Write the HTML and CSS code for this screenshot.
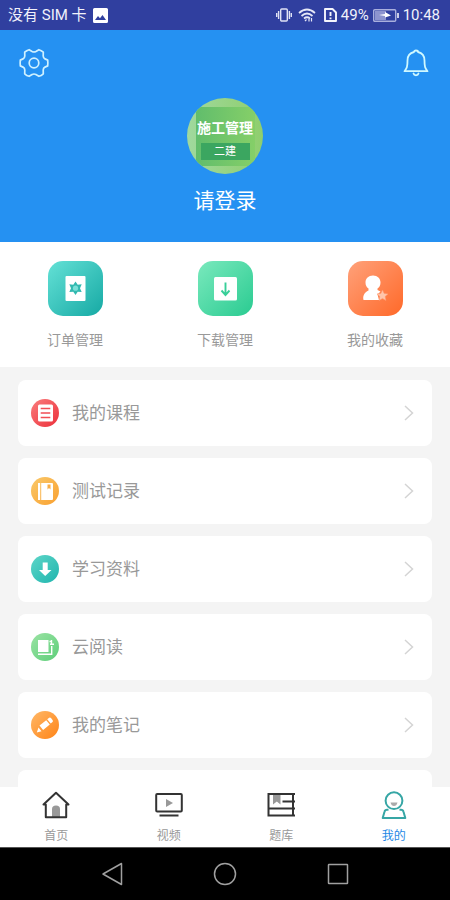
FILE: index.html
```html
<!DOCTYPE html>
<html lang="zh-CN">
<head>
<meta charset="utf-8">
<meta name="viewport" content="width=device-width, initial-scale=1">
<title>我的</title>
<link rel="stylesheet" href="styles.css">
</head>
<body>
<div class="app">
  <div class="status">
    <span>没有 SIM 卡</span>
    <svg class="photo" width="15" height="15" viewBox="0 0 15 15"><path fill="#fff" fill-rule="evenodd" d="M1.500 0h12a1.500 1.500 0 0 1 1.500 1.500v12a1.500 1.500 0 0 1-1.500 1.500h-12A1.500 1.500 0 0 1 0 13.500v-12A1.500 1.500 0 0 1 1.500 0zM2 12h11L9.500 7 7 10.200 5 8z"/></svg>
    <div class="status-right">
      <svg width="16" height="14" viewBox="0 0 16 14" fill="none" stroke="#dfe2f5" stroke-width="1.400"><rect x="4.700" y="1" width="6.600" height="12" rx="1"/><path d="M2.600 3v8M.7 5v4M13.400 3v8M15.300 5v4"/></svg>
      <svg class="wifi" width="18" height="14" viewBox="0 0 18 14" fill="none" stroke="#e6e8f7" stroke-width="1.700"><path d="M1 5Q9-2 17 5M3.500 8Q9 3 14.500 8M6 10.500Q9 8 12 10.500"/><path d="M7 13l1.500-1.500M11 13.500V11M13.500 13.500V10" stroke-width="1.200"/></svg>
      <svg width="13" height="14" viewBox="0 0 13 14" fill="none" stroke="#f4f5fc" stroke-width="1.900"><path d="M1 1h7.500L12 4.500V13H1z" stroke-linejoin="round"/><path d="M6.500 4v4M6.500 9.500v1.700"/></svg>
      <span>49%</span>
      <svg width="26" height="13" viewBox="0 0 26 13"><rect x=".7" y=".7" width="22" height="11.600" rx="1" fill="none" stroke="#a9afdd" stroke-width="1.400"/><path fill="#8d94cf" d="M2 2h11v9H2z"/><path fill="#fff" d="M6 6l6-1V3l6 3.500-6 2V7z"/><path stroke="#fff" stroke-width="1.500" d="M25 4v5"/></svg>
      <span>10:48</span>
    </div>
  </div>

  <header class="profile">
    <div class="actions">
      <button class="icon-btn" aria-label="设置"><svg width="30" height="30" viewBox="-15 -15 30 30" fill="none" stroke="#cff1ff" stroke-width="1.700" stroke-linejoin="round"><path d="M13.700-2.900Q14 0 13.700 2.900L11 4.100Q9.200 5.200 9.200 6.900L9.300 10.800Q7.300 12.600 4.900 13.300L1.900 11.500Q0 10.500-1.900 11.500L-4.900 13.300Q-7.300 12.600-9.300 10.800L-9.200 6.900Q-9.200 5.200-11 4.100L-13.700 2.900Q-14 0-13.700-2.900L-11-4.100Q-9.200-5.200-9.200-6.900L-9.300-10.800Q-7.300-12.600-4.900-13.300L-1.900-11.500Q0-10.500 1.900-11.500L4.900-13.300Q7.300-12.600 9.300-10.800L9.200-6.900Q9.200-5.200 11-4.100Z"/><circle r="4.800"/></svg></button>
      <button class="icon-btn" aria-label="消息"><svg width="26" height="30" viewBox="0 0 26 30" fill="none" stroke="#cff8ff" stroke-width="1.800" stroke-linejoin="round" stroke-linecap="round"><path d="M11 4Q11 2.500 13 2.500T15 4C19.500 5 21.500 8.500 21.500 12.500C21.500 18.500 22 20 24.500 23.200H1.500C4 20 4.500 18.500 4.500 12.500C4.500 8.500 6.500 5 11 4z"/><path d="M10.500 25.500Q11 27.300 13 27.300T15.500 25.500"/></svg></button>
    </div>
    <div class="avatar"><div class="cover"><strong>施工管理</strong><span>二建</span></div></div>
    <a class="login" href="#">请登录</a>
  </header>

  <nav class="shortcuts">
    <a href="#"><span class="tile teal"><svg width="55" height="55" viewBox="0 0 55 55"><rect x="17.500" y="15" width="20" height="25" rx="1" fill="#fff"/><path fill="#32b9b0" d="M27.500 20.500l2.200 3.200 4-.4-1.700 3.900 1.700 3.900-4-.4-2.200 3.300-2.200-3.300-4 .4 1.700-3.900-1.700-3.900 4 .4z"/><circle cx="27.500" cy="27.200" r="2.600" fill="#7ae0d7"/></svg></span>订单管理</a>
    <a href="#"><span class="tile green"><svg width="55" height="55" viewBox="0 0 55 55"><rect x="16" y="16" width="23" height="23.500" rx="1.500" fill="#fff"/><path d="M27.500 21.500v12M23.500 29.500l4 4.500 4-4.500" fill="none" stroke="#38cf99" stroke-width="1.900"/></svg></span>下载管理</a>
    <a href="#"><span class="tile orange"><svg width="55" height="55" viewBox="0 0 55 55"><path fill="#fff" d="M25 14.500c4.500 0 7.500 3 7.500 7 0 3-1.200 4.800-3 6v1.500l3 1.500-3 3 1.500 5.500H15.500c-1-4 .8-7.800 5-9.500v-2c-2-1.300-3-3.300-3-6 0-4 3-7 7.500-7z"/><path fill="#ffc5ab" stroke="#ff9b70" stroke-width=".5" d="M34.500 29l1.600 3.500 3.900.4-2.900 2.600.8 3.900-3.400-2-3.400 2 .8-3.900-2.900-2.600 3.900-.4z"/></svg></span>我的收藏</a>
  </nav>

  <main class="list-area">
    <ul class="list">
      <li><a class="card" href="#"><span class="dot red"><svg width="28" height="28" viewBox="0 0 28 28"><rect x="7" y="5.500" width="15" height="17" rx="1.500" fill="#fff"/><path stroke="#f14e55" stroke-width="1.500" d="M9.700 9.500h9.600M9.700 14h9.600M9.700 18.500h9.600"/></svg></span><span class="name">我的课程</span><svg class="chev" width="10" height="16" viewBox="0 0 10 16"><path d="M1 1l7.500 7L1 15"/></svg></a></li>
      <li><a class="card" href="#"><span class="dot yellow"><svg width="28" height="28" viewBox="0 0 28 28"><path fill="#fff" d="M7 6h2.200v17H7zM10.200 6H21a1 1 0 0 1 1 1v15a1 1 0 0 1-1 1H10.200z"/><path fill="#f8ad45" d="M16.500 7.500h3v5L18 11l-1.500 1.500z"/></svg></span><span class="name">测试记录</span><svg class="chev" width="10" height="16" viewBox="0 0 10 16"><path d="M1 1l7.500 7L1 15"/></svg></a></li>
      <li><a class="card" href="#"><span class="dot cyan"><svg width="28" height="28" viewBox="0 0 28 28"><path fill="#fff" d="M11.700 7.500h5V15h3.800L14.200 21 8 15h3.700z"/></svg></span><span class="name">学习资料</span><svg class="chev" width="10" height="16" viewBox="0 0 10 16"><path d="M1 1l7.500 7L1 15"/></svg></a></li>
      <li><a class="card" href="#"><span class="dot lime"><svg width="28" height="28" viewBox="0 0 28 28"><path fill="#fff" d="M7 7h10.500v12H7z"/><path fill="none" stroke="#fff" stroke-width="1.400" d="M7 21.300h13.700V13M20.500 7v4.500M18.500 8.500h2M19 11.300h4"/></svg></span><span class="name">云阅读</span><svg class="chev" width="10" height="16" viewBox="0 0 10 16"><path d="M1 1l7.500 7L1 15"/></svg></a></li>
      <li><a class="card" href="#"><span class="dot amber"><svg width="28" height="28" viewBox="0 0 28 28" fill="#fff"><path d="M8.500 14.500l6.700-5.300 3.600 4.400-6.700 5.300zM16.200 8.300l2-1.600q1-.6 1.800.3l1.700 2.200q.6 1-.2 1.700l-1.800 1.500zM7.500 16.500l3 3.800-4.700 1.300z"/></svg></span><span class="name">我的笔记</span><svg class="chev" width="10" height="16" viewBox="0 0 10 16"><path d="M1 1l7.500 7L1 15"/></svg></a></li>
      <li class="card"></li>
    </ul>
  </main>

  <nav class="tabs">
    <a href="#"><svg width="28" height="28" viewBox="0 0 28 28"><path fill="#999" d="M10 26v-8q0-3.500 4-3.500t4 3.500v8z"/><path fill="none" stroke="#333" stroke-width="2" stroke-linejoin="round" stroke-linecap="round" d="M3.800 13.500H1.500L14 1.800l12.500 11.700h-2.300v12.700H3.800z"/></svg>首页</a>
    <a href="#"><svg width="28" height="28" viewBox="0 0 28 28"><path fill="none" stroke="#333" stroke-width="2" d="M4.500 24.500h19"/><rect x="1.200" y="3" width="25.600" height="17.500" rx="1" fill="none" stroke="#333" stroke-width="2"/><path fill="#999" d="M11 8l7 4-7 4z"/></svg>视频</a>
    <a href="#"><svg width="28" height="28" viewBox="0 0 28 28"><path fill="#999" d="M6 3.500h7.500v10l-3.700-3-3.800 3z"/><path fill="none" stroke="#333" stroke-width="2" d="M28 3H1.500v21.500H28M1.500 17.500H28M15.500 10.500H28M26 3v21"/></svg>题库</a>
    <a class="active" href="#"><svg width="28" height="28" viewBox="0 0 28 28"><g fill="none" stroke="#36a6a5" stroke-width="2" stroke-linejoin="round"><circle cx="14" cy="9.700" r="8.400"/><path d="M8.500 18.700H7q-2 0-2.500 2L2.700 27h22.600l-1.800-6.300q-.5-2-2.500-2h-1.500"/></g><path fill="#aaa" d="M10.500 11.500h7q-1 3.500-3.500 3.500t-3.500-3.500z"/></svg>我的</a>
  </nav>

  <div class="sysnav">
    <button aria-label="返回"><svg width="24" height="24" viewBox="0 0 24 24"><path stroke-linejoin="round" d="M21.500 1.500v21L3 12z"/></svg></button>
    <button aria-label="主屏幕"><svg width="24" height="24" viewBox="0 0 24 24"><circle cx="12" cy="12" r="10.500"/></svg></button>
    <button aria-label="最近任务"><svg width="24" height="24" viewBox="0 0 24 24"><rect x="2.500" y="2.500" width="19" height="19" rx=".5"/></svg></button>
  </div>
</div>
</body>
</html>
```
FILE: styles.css
```css
* { box-sizing: border-box; }
body {
  margin: 0;
  font-family: Roboto, "Noto Sans CJK SC", sans-serif;
  color: #999;
  background: #f4f4f4;
}
a { color: inherit; text-decoration: none; }
button { padding: 0; border: 0; background: none; }
svg { display: block; flex: none; }
.app { height: 100vh; display: flex; flex-direction: column; }

.status {
  flex: none;
  height: 30px;
  padding: 0 10px 0 8px;
  display: flex;
  align-items: center;
  gap: 6px;
  font-size: 15px;
  line-height: 20px;
  color: #f1f2fb;
  background: #303f9f;
}
.status-right { margin-left: auto; display: flex; align-items: center; gap: 4px; }
.wifi { margin: 0 4px 0 2px; }

.profile {
  flex: none;
  height: 212px;
  padding-top: 18px;
  display: flex;
  flex-direction: column;
  align-items: center;
  color: #fff;
  background: #2591f2;
}
.actions { width: 100%; padding: 0 21px 0 19px; display: flex; justify-content: space-between; }
.avatar {
  width: 76px;
  height: 76px;
  margin-top: 20px;
  border-radius: 50%;
  overflow: hidden;
  display: flex;
  justify-content: center;
  background: linear-gradient(90deg, #a0d99e, #8fce6d);
}
.cover {
  width: 59px;
  margin: 9px 0 8px;
  padding-top: 12px;
  display: flex;
  flex-direction: column;
  align-items: center;
  gap: 6px;
  background: linear-gradient(90deg, #61bd6c, #85cf68);
}
.cover strong { font-size: 14px; line-height: 18px; white-space: nowrap; }
.cover span {
  width: 49px;
  font-size: 11px;
  line-height: 17px;
  text-align: center;
  background: #3ba660;
}
.login { margin-top: 12px; font-size: 21px; line-height: 30px; }

.shortcuts {
  flex: none;
  height: 125px;
  padding-top: 19px;
  display: grid;
  grid-template-columns: repeat(3, 1fr);
  font-size: 14px;
  line-height: 20px;
  background: #fff;
}
.shortcuts a { display: flex; flex-direction: column; align-items: center; gap: 14px; }
.tile { border-radius: 15px; }
.teal { background: linear-gradient(135deg, #64e1d6, #16a9a4); }
.green { background: linear-gradient(135deg, #7ae9bd, #2acb91); }
.orange { background: linear-gradient(135deg, #ffa17a, #ff6929); }

.list-area { flex: 1; min-height: 0; overflow: hidden; padding: 13px 18px 0; }
.list { margin: 0; padding: 0; list-style: none; display: grid; gap: 12px; }
.card {
  height: 66px;
  padding: 0 18px 0 13px;
  display: flex;
  align-items: center;
  border-radius: 8px;
  background: #fff;
}
.name { margin-left: 13px; font-size: 17px; line-height: 24px; }
.chev { margin-left: auto; fill: none; stroke: #d4d4d4; stroke-width: 1.5; }
.dot { border-radius: 50%; }
.red { background: linear-gradient(135deg, #fa7d7d, #ec2f3a); }
.yellow { background: linear-gradient(135deg, #fac96a, #f9a030); }
.cyan { background: linear-gradient(135deg, #5ed6c8, #1fb5ae); }
.lime { background: linear-gradient(135deg, #9be3a4, #5dce79); }
.amber { background: linear-gradient(135deg, #ffb868, #ff8416); }

.tabs {
  flex: none;
  height: 60px;
  padding-top: 4px;
  display: grid;
  grid-template-columns: repeat(4, 1fr);
  font-size: 12px;
  line-height: 18px;
  background: #fff;
}
.tabs a { display: flex; flex-direction: column; align-items: center; gap: 8px; }
.tabs .active { color: #1e88e5; }

.sysnav {
  flex: none;
  height: 53px;
  padding: 0 56px;
  display: grid;
  grid-template-columns: repeat(3, 1fr);
  place-items: center;
  border-top: 1px solid #555;
  background: #000;
}
.sysnav svg { fill: none; stroke: #a0a0a0; stroke-width: 1.5; }
```
